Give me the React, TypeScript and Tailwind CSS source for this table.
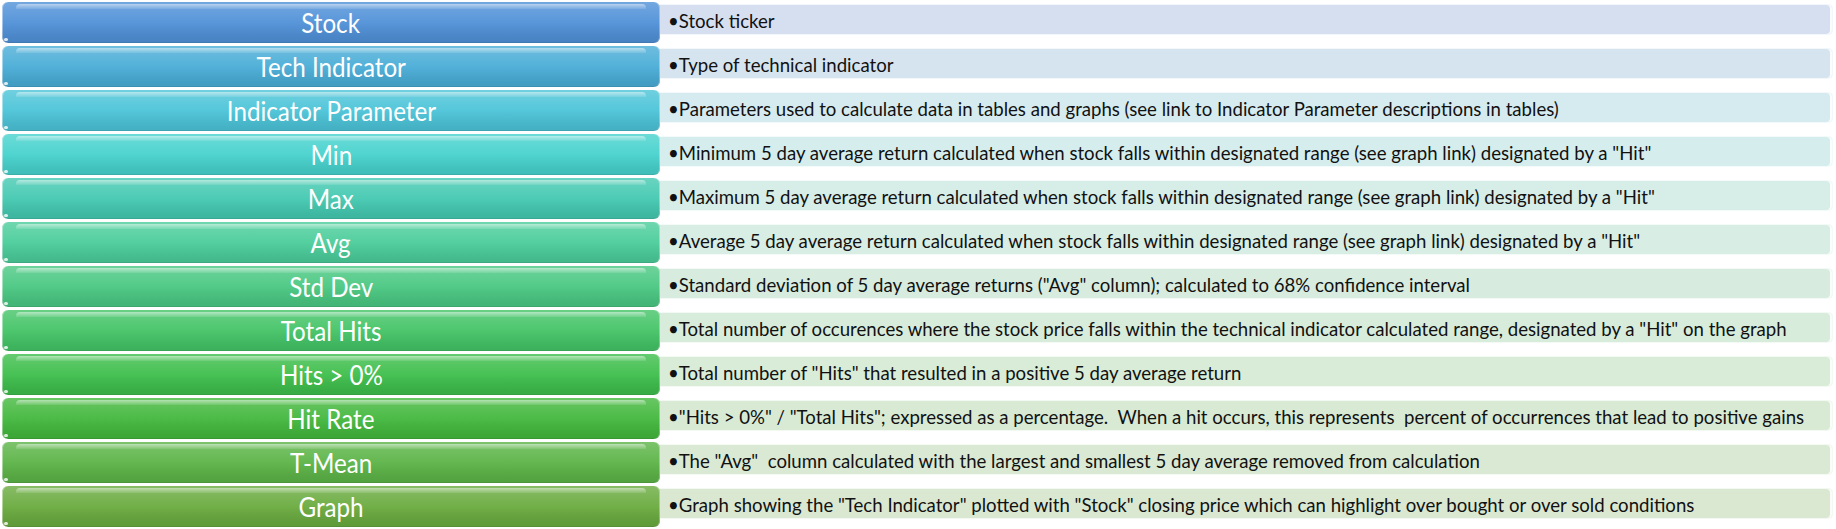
import React from "react";

type Row = { t: string; d: string; bar: string; panel: string };

const rows: Row[] = [
  { t: "Stock", d: "Stock ticker", bar: "bg-[#5091d8]", panel: "bg-[#d6dff0]" },
  { t: "Tech Indicator", d: "Type of technical indicator", bar: "bg-[#4aadd7]", panel: "bg-[#d5e4ef]" },
  { t: "Indicator Parameter", d: "Parameters used to calculate data in tables and graphs (see link to Indicator Parameter descriptions in tables)", bar: "bg-[#4cc4d8]", panel: "bg-[#d6ebf0]" },
  { t: "Min", d: "Minimum 5 day average return calculated when stock falls within designated range (see graph link) designated by a \"Hit\"", bar: "bg-[#47d2cd]", panel: "bg-[#d5eeed]" },
  { t: "Max", d: "Maximum 5 day average return calculated when stock falls within designated range (see graph link) designated by a \"Hit\"", bar: "bg-[#44c9b1]", panel: "bg-[#d7ede8]" },
  { t: "Avg", d: "Average 5 day average return calculated when stock falls within designated range (see graph link) designated by a \"Hit\"", bar: "bg-[#4bcd9b]", panel: "bg-[#d8ede3]" },
  { t: "Std Dev", d: "Standard deviation of 5 day average returns (\"Avg\" column); calculated to 68% confidence interval", bar: "bg-[#4ac882]", panel: "bg-[#d7ecdf]" },
  { t: "Total Hits", d: "Total number of occurences where the stock price falls within the technical indicator calculated range, designated by a \"Hit\" on the graph", bar: "bg-[#44c467]", panel: "bg-[#d8ecdb]" },
  { t: "Hits > 0%", d: "Total number of \"Hits\" that resulted in a positive 5 day average return", bar: "bg-[#3ebe4c]", panel: "bg-[#d8ecd7]" },
  { t: "Hit Rate", d: "\"Hits > 0%\" / \"Total Hits\"; expressed as a percentage.  When a hit occurs, this represents  percent of occurrences that lead to positive gains", bar: "bg-[#43b83d]", panel: "bg-[#d8ead4]" },
  { t: "T-Mean", d: "The \"Avg\"  column calculated with the largest and smallest 5 day average removed from calculation", bar: "bg-[#5cb447]", panel: "bg-[#d9e9d3]" },
  { t: "Graph", d: "Graph showing the \"Tech Indicator\" plotted with \"Stock\" closing price which can highlight over bought or over sold conditions", bar: "bg-[#6aab3f]", panel: "bg-[#dae8d2]" },
];

export default function App() {
  return (
    <div className="w-[1836px] h-[529px] bg-white flex flex-col gap-[3px] pt-[2px] font-['Lato','Open_Sans',sans-serif]">
      {rows.map((r) => (
        <div key={r.t} className="flex items-start h-[41px]">
          <div
            className={`relative z-10 ml-[2px] w-[658px] h-[41px] rounded-[6px] ${r.bar} shadow-[inset_1px_0_0_rgba(255,255,255,0.45),inset_-1px_0_0_rgba(255,255,255,0.35),inset_0_-1px_0_rgba(0,0,0,0.08)] flex items-center justify-center overflow-hidden`}
          >
            <div className="absolute inset-0 bg-linear-to-b from-white/20 via-white/5 to-black/10" />
            <div className="absolute left-[14px] right-[14px] top-[2px] h-[5px] rounded-t-[4px] bg-linear-to-b from-white/50 to-white/10" />
            <div className="absolute left-[2px] bottom-[2px] w-[4px] h-[3px] rounded-full bg-white/80" />
            <span className="relative text-white text-[26px] leading-none scale-x-[0.93]">{r.t}</span>
          </div>
          <div
            className={`-ml-[5px] mt-[2px] w-[1178px] h-[31px] rounded-[5px] ${r.panel} border border-white/70 shadow-[inset_-2px_0_0_rgba(255,255,255,0.9)] flex items-center pl-[12px] pt-[3px]`}
          >
            <span className="text-[#111] text-[18.6px] leading-none whitespace-pre">{"\u2022" + r.d}</span>
          </div>
        </div>
      ))}
    </div>
  );
}
